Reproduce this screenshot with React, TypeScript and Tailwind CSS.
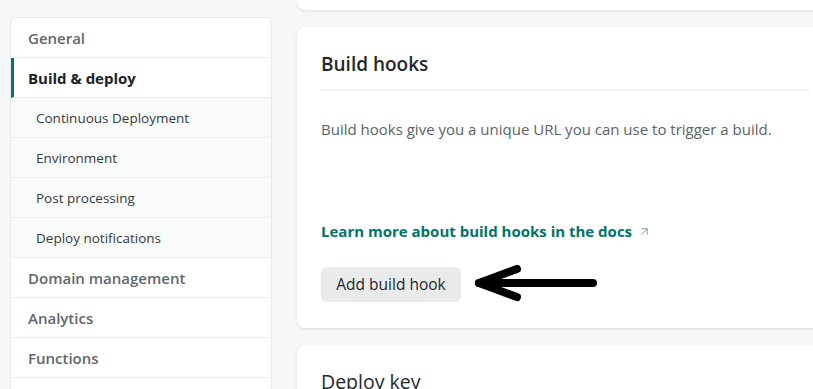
import { ArrowUpRight } from 'lucide-react';

const navTop = [{ label: 'General' }];
const subItems = ['Continuous Deployment', 'Environment', 'Post processing', 'Deploy notifications'];
const navBottom = ['Domain management', 'Analytics', 'Functions'];

function Sidebar() {
  return (
    <nav className="mt-[17px] w-[262px] shrink-0 self-start overflow-hidden rounded-t-[6px] border border-[#e6e9e9] bg-white">
      {navTop.map((n) => (
        <div key={n.label} className="flex h-10 items-center border-b border-[#eceeee] pl-[17px] pt-[2px] text-[15px] font-semibold text-[#60676d]">
          {n.label}
        </div>
      ))}
      <div className="flex h-10 items-center border-b border-l-[3px] border-b-[#eceeee] border-l-[#00796f] pl-[14px] pt-[2px] text-[15px] font-bold text-[#1c2227]">
        Build &amp; deploy
      </div>
      {subItems.map((s) => (
        <div key={s} className="flex h-10 items-center border-b border-[#eceeee] bg-[#f9fafa] pl-[25px] pt-[2px] text-[13.5px] font-medium text-[#353b41]">
          {s}
        </div>
      ))}
      {navBottom.map((n) => (
        <div key={n} className="flex h-10 items-center border-b border-[#eceeee] pl-[17px] pt-[2px] text-[15px] font-semibold text-[#60676d]">
          {n}
        </div>
      ))}
      <div className="h-10" />
    </nav>
  );
}

function PointerArrow() {
  return (
    <svg width="126" height="44" viewBox="0 0 126 44" className="ml-[12px]">
      <g fill="none" stroke="#000" strokeWidth="8" strokeLinecap="round" strokeLinejoin="round">
        <path d="M6 20 L120 20" />
        <path d="M44 6 L6 20 L44 34" />
      </g>
    </svg>
  );
}

export default function App() {
  return (
    <div
      className="flex h-[389px] w-[813px] gap-[25px] overflow-hidden bg-[#f6f8f8] pl-[10px]"
      style={{ fontFamily: '"Open Sans", "Noto Sans", sans-serif' }}
    >
      <Sidebar />
      <main className="mr-[-20px] flex min-w-0 flex-1 flex-col gap-[17px]">
        <div className="h-[10px] shrink-0 rounded-b-lg bg-white shadow-[0_1px_3px_rgba(20,40,40,0.12)]" />

        <section className="shrink-0 rounded-lg bg-white px-6 pt-[22px] pb-[21px] shadow-[0_1px_3px_rgba(20,40,40,0.12)]">
          <h2 className="text-[19px] font-semibold leading-[30px] text-[#1f272d]">Build hooks</h2>
          <div className="mt-[10px] h-[2px] bg-[#f0f2f2]" />
          <p className="mt-[26px] text-[15px] leading-6 text-[#5b636a]">
            Build hooks give you a unique URL you can use to trigger a build.
          </p>
          <div className="h-[79px]" />
          <a className="flex items-center gap-[6px] text-[15px] font-bold text-[#00736b]">
            Learn more about build hooks in the docs
            <ArrowUpRight size={13} strokeWidth={1.5} className="text-[#4f8f8a]" />
          </a>
          <div className="mt-[20px] flex items-center">
            <button className="h-[35px] w-[140px] rounded-[6px] bg-[#e9ebeb] text-[15.5px] font-medium text-[#1f262b]">
              Add build hook
            </button>
            <PointerArrow />
          </div>
        </section>

        <section className="shrink-0 rounded-lg bg-white px-6 pt-[22px] pb-6 shadow-[0_1px_3px_rgba(20,40,40,0.12)]">
          <h2 className="text-[19.5px] font-medium leading-[30px] text-[#1f272d]">Deploy key</h2>
        </section>
      </main>
    </div>
  );
}
